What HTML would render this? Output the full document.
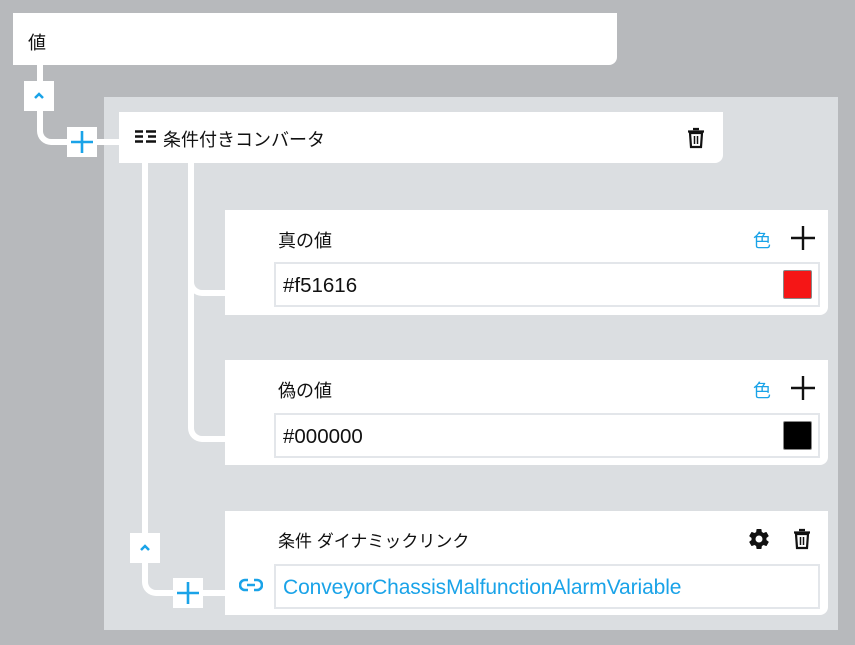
<!DOCTYPE html>
<html><head><meta charset="utf-8"><style>
*{margin:0;padding:0;box-sizing:border-box}
body{width:855px;height:645px;background:#b7b9bc;position:relative;overflow:hidden;font-family:"Liberation Sans","Noto Sans CJK JP",sans-serif;color:#111}
.a{position:absolute}
.card{position:absolute;background:#fff;border-radius:0 0 8px 0}
.ln{position:absolute;background:#fff}
.box{position:absolute;background:#fff;width:30px;height:30px;display:flex;align-items:center;justify-content:center}
.inp{position:absolute;background:#fff;border:2px solid #e3e6ea;font-size:20.5px;padding-left:7px;padding-top:2px;display:flex;align-items:center}
.t{position:absolute;font-size:18px}
.sw{position:absolute;width:29px;height:29px;border:1px solid #888;border-radius:2px}
</style></head><body>
<div class="card" style="left:13px;top:13px;width:604px;height:52px"></div>
<div class="t" style="left:28px;top:29px">値</div>
<div class="a" style="left:104px;top:97px;width:734px;height:533px;background:#dbdee1"></div>
<div class="a" style="left:37px;top:60px;width:50px;height:85px;border-left:6px solid #fff;border-bottom:6px solid #fff;border-bottom-left-radius:14px"></div>
<div class="ln" style="left:87px;top:139px;width:40px;height:6px"></div>
<div class="a" style="left:142px;top:150px;width:90px;height:446px;border-left:6px solid #fff;border-bottom:6px solid #fff;border-bottom-left-radius:14px"></div>
<div class="a" style="left:188px;top:150px;width:40px;height:146px;border-left:6px solid #fff;border-bottom:6px solid #fff;border-bottom-left-radius:14px"></div>
<div class="a" style="left:188px;top:280px;width:40px;height:162px;border-left:6px solid #fff;border-bottom:6px solid #fff;border-bottom-left-radius:14px"></div>
<div class="box" style="left:24px;top:81px"><svg width="14" height="10" viewBox="0 0 14 10"><path d="M3 7L7 3L11 7" stroke="#1aa3e8" stroke-width="2.5" fill="none"/></svg></div>
<div class="box" style="left:67px;top:127px"><svg width="24" height="24"><path d="M12 1V23M1 12H23" stroke="#1aa3e8" stroke-width="2.6"/></svg></div>
<div class="box" style="left:130px;top:533px"><svg width="14" height="10" viewBox="0 0 14 10"><path d="M3 7L7 3L11 7" stroke="#1aa3e8" stroke-width="2.5" fill="none"/></svg></div>
<div class="box" style="left:173px;top:578px"><svg width="24" height="24"><path d="M12 1V23M1 12H23" stroke="#1aa3e8" stroke-width="2.6"/></svg></div>
<div class="card" style="left:119px;top:112px;width:604px;height:51px"></div>
<svg class="a" style="left:135px;top:130px" width="22" height="14"><path d="M0 1.5H8M0 6.5H8M0 11.5H8M11 1.5H21M13 6.5H21M11 11.5H21" stroke="#111" stroke-width="2.5"/></svg>
<div class="t" style="left:163px;top:126px">条件付きコンバータ</div>
<svg class="a" style="left:687px;top:127px" width="18" height="22" viewBox="0 0 18 22"><path d="M6 2h6M1 4.5h16" stroke="#111" stroke-width="2.2"/><path d="M3 6h12l-1 14H4z" fill="none" stroke="#111" stroke-width="2.2"/><path d="M7.5 9v8M10.5 9v8" stroke="#111" stroke-width="1.5"/></svg>
<div class="card" style="left:225px;top:210px;width:603px;height:105px"></div>
<div class="t" style="left:278px;top:227px">真の値</div>
<div class="t" style="left:753px;top:227px;color:#1aa3e8">色</div>
<svg class="a" style="left:790px;top:225px" width="26" height="26"><path d="M13 1V25M1 13H25" stroke="#111" stroke-width="2.4"/></svg>
<div class="inp" style="left:274px;top:262px;width:546px;height:45px">#f51616</div>
<div class="sw" style="left:783px;top:270px;background:#f51616"></div>
<div class="card" style="left:225px;top:360px;width:603px;height:105px"></div>
<div class="t" style="left:278px;top:377px">偽の値</div>
<div class="t" style="left:753px;top:377px;color:#1aa3e8">色</div>
<svg class="a" style="left:790px;top:375px" width="26" height="26"><path d="M13 1V25M1 13H25" stroke="#111" stroke-width="2.4"/></svg>
<div class="inp" style="left:274px;top:413px;width:546px;height:45px">#000000</div>
<div class="sw" style="left:783px;top:421px;background:#000"></div>
<div class="card" style="left:225px;top:511px;width:603px;height:104px"></div>
<div class="t" style="left:278px;top:527px;font-size:17px">条件 ダイナミックリンク</div>
<svg class="a" style="left:747px;top:527px" width="24" height="24" viewBox="0 0 24 24"><path fill="#111" d="M19.4 13c.04-.3.06-.65.06-1s-.02-.7-.07-1l2.1-1.65c.2-.15.24-.42.12-.64l-2-3.46c-.12-.22-.39-.3-.61-.22l-2.49 1c-.52-.4-1.080-.73-1.69-.98l-.38-2.650A.49.49 0 0 0 14 2h-4c-.25 0-.46.18-.49.42l-.38 2.65c-.61.25-1.17.59-1.69.98l-2.49-1c-.23-.09-.49 0-.61.22l-2 3.46c-.13.22-.07.49.12.64L4.57 11c-.04.32-.07.66-.07 1s.02.68.06 1l-2.1 1.65c-.2.15-.24.42-.12.64l2 3.46c.12.22.39.3.61.22l2.49-1c.52.4 1.08.73 1.69.98l.38 2.65c.03.24.24.42.49.42h4c.25 0 .46-.18.49-.42l.38-2.65c.61-.25 1.17-.59 1.69-.98l2.49 1c.23.09.49 0 .61-.22l2-3.46c.12-.22.07-.49-.12-.64L19.4 13zM12 15.5a3.5 3.5 0 1 1 0-7 3.5 3.5 0 0 1 0 7z"/></svg>
<svg class="a" style="left:793px;top:528px" width="18" height="22" viewBox="0 0 18 22"><path d="M6 2h6M1 4.5h16" stroke="#111" stroke-width="2.2"/><path d="M3 6h12l-1 14H4z" fill="none" stroke="#111" stroke-width="2.2"/><path d="M7.5 9v8M10.5 9v8" stroke="#111" stroke-width="1.5"/></svg>
<svg class="a" style="left:239px;top:576px" width="24" height="18" viewBox="0 0 24 18"><path d="M9 4H6a5 5 0 0 0 0 10h3M15 4h3a5 5 0 0 1 0 10h-3M8 9h8" stroke="#1aa3e8" stroke-width="2.6" fill="none"/></svg>
<div class="inp" style="left:274px;top:564px;width:546px;height:45px;color:#1aa3e8;font-size:21px;letter-spacing:-0.1px">ConveyorChassisMalfunctionAlarmVariable</div>
</body></html>
